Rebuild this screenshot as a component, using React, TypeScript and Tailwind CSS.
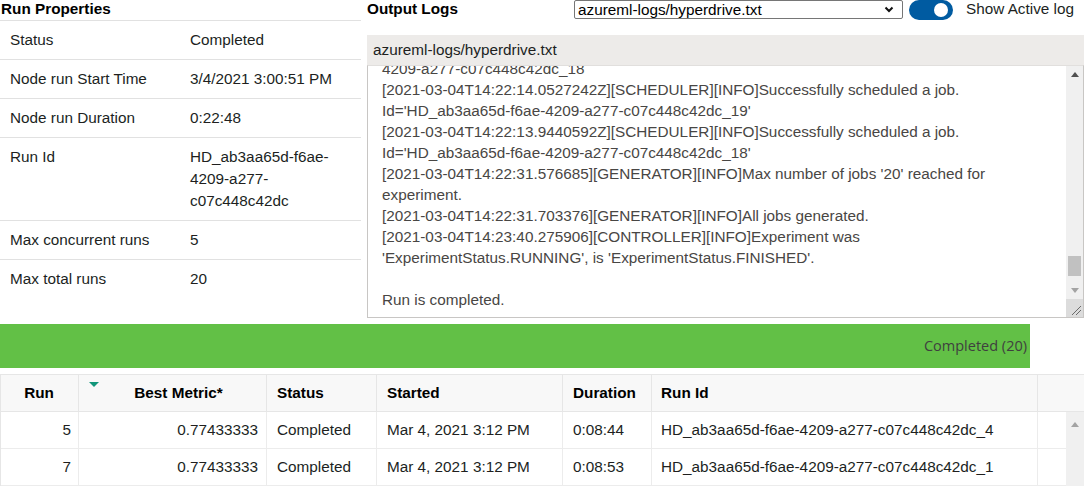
const props = [
    { label: 'Status', value: ['Completed'] },
    { label: 'Node run Start Time', value: ['3/4/2021 3:00:51 PM'] },
    { label: 'Node run Duration', value: ['0:22:48'] },
    { label: 'Run Id', value: ['HD_ab3aa65d-f6ae-', '4209-a277-', 'c07c448c42dc'] },
    { label: 'Max concurrent runs', value: ['5'] },
    { label: 'Max total runs', value: ['20'] }
];

const logLines = [
    "4209-a277-c07c448c42dc_18",
    "[2021-03-04T14:22:14.0527242Z][SCHEDULER][INFO]Successfully scheduled a job.",
    "Id='HD_ab3aa65d-f6ae-4209-a277-c07c448c42dc_19'",
    "[2021-03-04T14:22:13.9440592Z][SCHEDULER][INFO]Successfully scheduled a job.",
    "Id='HD_ab3aa65d-f6ae-4209-a277-c07c448c42dc_18'",
    "[2021-03-04T14:22:31.576685][GENERATOR][INFO]Max number of jobs '20' reached for",
    "experiment.",
    "[2021-03-04T14:22:31.703376][GENERATOR][INFO]All jobs generated.",
    "[2021-03-04T14:23:40.275906][CONTROLLER][INFO]Experiment was",
    "'ExperimentStatus.RUNNING', is 'ExperimentStatus.FINISHED'.",
    "",
    "Run is completed."
];

const runs = [
    { run: '5', metric: '0.77433333', status: 'Completed', started: 'Mar 4, 2021 3:12 PM', duration: '0:08:44', id: 'HD_ab3aa65d-f6ae-4209-a277-c07c448c42dc_4' },
    { run: '7', metric: '0.77433333', status: 'Completed', started: 'Mar 4, 2021 3:12 PM', duration: '0:08:53', id: 'HD_ab3aa65d-f6ae-4209-a277-c07c448c42dc_1' }
];

const cols = 'grid grid-cols-[78px_188px_110px_186px_89px_386px_28px]';

const RunProperties = () => (
    <div className="w-[361px] shrink-0">
        <div className="h-[20px] leading-[18px] font-bold pl-[1px] text-black">Run Properties</div>
        {props.map((p, i) => (
            <div key={i} className="flex border-t border-[#e1e1e1] py-[8px] leading-[22px] text-[#201f1e]">
                <div className="w-[190px] pl-[10px]">{p.label}</div>
                <div>
                    {p.value.map((v, j) => (
                        <div key={j}>{v}</div>
                    ))}
                </div>
            </div>
        ))}
    </div>
);

const OutputLogs = () => (
    <div className="ml-[6px] flex-1 flex flex-col">
        <div className="h-[35px] flex items-start">
            <div className="w-[207px] leading-[18px] font-bold text-black">Output Logs</div>
            <div className="w-[329px] h-[19px] border border-[#767676] rounded-[2px] flex items-center justify-between pl-[3px] pr-[8px] bg-white">
                <span className="leading-[17px]">azureml-logs/hyperdrive.txt</span>
                <svg width="10" height="7" viewBox="0 0 10 7">
                    <path d="M1.5 1.5 L5 5 L8.5 1.5" fill="none" stroke="#111" strokeWidth="2" />
                </svg>
            </div>
            <div className="ml-[6px] w-[44px] h-[20px] rounded-full bg-[#005ba1] flex items-center justify-end pr-[5px]">
                <div className="w-[14px] h-[14px] rounded-full bg-white" />
            </div>
            <div className="ml-[13px] leading-[18px] text-[#201f1e]">Show Active log</div>
        </div>
        <div className="h-[30px] bg-[#edebe9] flex items-center pl-[6px] pt-[1px] text-[#201f1e]">azureml-logs/hyperdrive.txt</div>
        <div className="h-[253px] border border-[#c8c6c4] border-t-[#e1dfdd] flex bg-white">
            <div className="flex-1 overflow-hidden pl-[14px]">
                <div className="mt-[-8px] leading-[21px] text-[#484644] whitespace-nowrap">
                    {logLines.map((l, i) => (
                        <div key={i} className="h-[21px]">{l}</div>
                    ))}
                </div>
            </div>
            <div className="w-[17px] flex flex-col bg-[#f0f0f0]">
                <div className="h-[17px] flex items-center justify-center">
                    <svg width="8" height="5" viewBox="0 0 8 5"><path d="M0 5 L4 0 L8 5 Z" fill="#505050" /></svg>
                </div>
                <div className="flex-1 flex flex-col justify-end px-[2px] pb-[6px]">
                    <div className="h-[20px] bg-[#c1c1c1]" />
                </div>
                <div className="h-[17px] flex items-center justify-center">
                    <svg width="8" height="5" viewBox="0 0 8 5"><path d="M0 0 L8 0 L4 5 Z" fill="#a3a3a3" /></svg>
                </div>
                <div className="h-[18px] bg-[#dcdcdc] flex items-end justify-end p-[2px]">
                    <svg width="10" height="10" viewBox="0 0 10 10">
                        <path d="M1 10 L10 1 M5 10 L10 5" stroke="#6a6a6a" strokeWidth="1" />
                    </svg>
                </div>
            </div>
        </div>
    </div>
);

const RunsTable = () => (
    <div className="mt-[6px] border-t border-l border-[#e6e6e6]">
        <div className="flex bg-[#f8f8f8] border-b border-[#e6e6e6] h-[37px] font-bold text-black">
            <div className={`${cols} flex-none`}>
                <div className="flex items-center justify-center pr-[1px] border-r border-[#e6e6e6]">Run</div>
                <div className="relative flex items-center justify-center pl-[12px] border-r border-[#e6e6e6]">
                    <svg className="absolute left-[10px] top-[7px]" width="10" height="5" viewBox="0 0 10 5">
                        <path d="M0 0 L10 0 L5 5 Z" fill="#12967a" />
                    </svg>
                    Best Metric*
                </div>
                <div className="flex items-center pl-[10px] border-r border-[#e6e6e6]">Status</div>
                <div className="flex items-center pl-[10px] border-r border-[#e6e6e6]">Started</div>
                <div className="flex items-center pl-[10px] border-r border-[#e6e6e6]">Duration</div>
                <div className="flex items-center pl-[9px] border-r border-[#e6e6e6]">Run Id</div>
                <div />
            </div>
            <div className="flex-1" />
        </div>
        <div className="flex">
            <div className="flex-none">
                {runs.map((r, i) => (
                    <div key={i} className={`${cols} h-[37px] border-b border-[#ececec] text-[#201f1e]`}>
                        <div className="flex items-center justify-end pr-[7px] border-r border-[#ececec]">{r.run}</div>
                        <div className="flex items-center justify-end pr-[8px] border-r border-[#ececec]">{r.metric}</div>
                        <div className="flex items-center pl-[10px] border-r border-[#ececec]">{r.status}</div>
                        <div className="flex items-center pl-[10px] border-r border-[#ececec]">{r.started}</div>
                        <div className="flex items-center pl-[10px] border-r border-[#ececec]">{r.duration}</div>
                        <div className="flex items-center pl-[9px] border-r border-[#ececec]">{r.id}</div>
                        <div />
                    </div>
                ))}
            </div>
            <div className="flex-1 bg-[#f0f0f0] flex justify-center pt-[10px]">
                <svg width="8" height="5" viewBox="0 0 8 5"><path d="M0 5 L4 0 L8 5 Z" fill="#a3a3a3" /></svg>
            </div>
        </div>
    </div>
);

export default function App() {
    return (
        <div className="w-[1084px] h-[487px] overflow-hidden bg-white font-['Liberation_Sans',Arial,sans-serif] text-[15.3px]">
            <div className="flex h-[318px]">
                <RunProperties />
                <OutputLogs />
            </div>
            <div className="mt-[6px] w-[1030px] h-[44px] bg-[#62c046] flex items-center justify-end pr-[3px] font-['Open_Sans',sans-serif] text-[14.5px] text-[#3f3f3f]">
                Completed (20)
            </div>
            <RunsTable />
        </div>
    );
}
